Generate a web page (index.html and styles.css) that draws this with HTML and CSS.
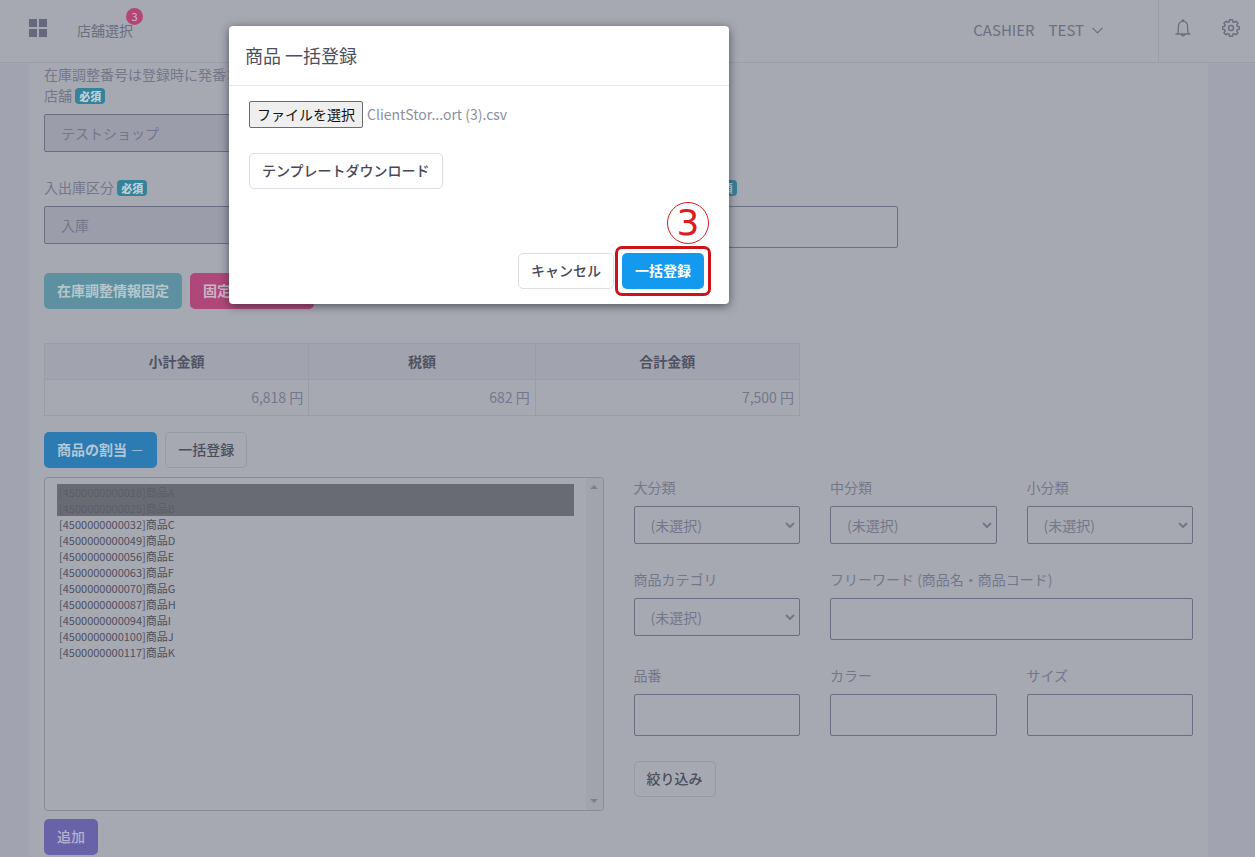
FILE: index.html
```html
<!DOCTYPE html>
<html lang="ja">
<head>
<meta charset="utf-8">
<title>商品 一括登録</title>
<link rel="stylesheet" href="styles.css">
</head>
<body>
<header class="topbar">
  <button class="icon-btn menu-btn" type="button" aria-label="メニュー">
    <svg width="18" height="18" viewBox="0 0 18 18" fill="currentColor"><path d="M0 0h8v8H0zM10 0h8v8h-8zM0 10h8v8H0zM10 10h8v8h-8z"/></svg>
  </button>
  <a class="shop-link" href="#">店舗選択<span class="count">3</span></a>
  <button class="account" type="button"><span>CASHIER</span><span>TEST</span>
    <svg width="11" height="7" viewBox="0 0 11 7" fill="none" stroke="currentColor" stroke-width="1.200"><path d="M.5 .8 5.500 5.800 10.500 .8"/></svg>
  </button>
  <div class="tools">
    <button class="icon-btn" type="button" aria-label="通知">
      <svg width="18" height="18" viewBox="0 0 18 18" fill="none" stroke="currentColor" stroke-width="1.300" stroke-linejoin="round"><path d="M1.500 15h15M3.500 15c.9-1.500.9-3 .9-7C4.400 4.500 6 2.300 9 2.300S13.600 4.500 13.600 8c0 4 0 5.500.9 7M8 2.200C8 .6 10 .6 10 2.200M7.300 15.500c.4 1.700 3 1.700 3.400 0"/></svg>
    </button>
    <button class="icon-btn" type="button" aria-label="設定">
      <svg width="18" height="18" viewBox="0 0 18 18" fill="none" stroke="currentColor" stroke-width="1.500" stroke-linejoin="round"><path d="M7.600 .7h2.800l.4 2.100 1.400.6 1.800-1.200 2 2-1.200 1.800.6 1.400 2.100.4v2.400l-2.100.4-.6 1.400 1.200 1.800-2 2-1.800-1.200-1.400.6-.4 2.100H7.600l-.4-2.100-1.400-.6L4 15.800l-2-2L3.200 12l-.6-1.400-2.100-.4V7.800l2.100-.4L3.200 6 2 4.200l2-2 1.800 1.200 1.400-.6z"/><circle cx="9" cy="9" r="2.500"/></svg>
    </button>
  </div>
</header>

<main class="sheet">
  <p class="note">在庫調整番号は登録時に発番されます。</p>
  <div class="row">
    <div class="field">
      <label for="shop">店舗 <span class="req">必須</span></label>
      <input id="shop" class="control locked" type="text" value="テストショップ" readonly>
    </div>
  </div>
  <div class="row">
    <div class="field">
      <label for="kind">入出庫区分 <span class="req">必須</span></label>
      <input id="kind" class="control locked" type="text" value="入庫" readonly>
    </div>
    <div class="field third">
      <label for="date">在庫調整日 <span class="req">必須</span></label>
      <input id="date" class="control tall" type="text">
    </div>
  </div>
  <div class="actions">
    <button class="btn teal" type="button">在庫調整情報固定</button>
    <button class="btn pink" type="button">固定を解除する</button>
  </div>

  <table class="totals">
    <thead><tr><th class="wide">小計金額</th><th>税額</th><th class="wide">合計金額</th></tr></thead>
    <tbody><tr><td>6,818 円</td><td>682 円</td><td>7,500 円</td></tr></tbody>
  </table>

  <div class="actions assign">
    <button class="btn blue" type="button">商品の割当 <span class="dash">－</span></button>
    <button class="btn outline" type="button">一括登録</button>
  </div>

  <div class="picker">
    <div>
      <div class="listbox">
        <select class="items" multiple size="11" aria-label="商品">
          <option selected>[4500000000018]商品A</option>
          <option selected>[4500000000025]商品B</option>
          <option>[4500000000032]商品C</option>
          <option>[4500000000049]商品D</option>
          <option>[4500000000056]商品E</option>
          <option>[4500000000063]商品F</option>
          <option>[4500000000070]商品G</option>
          <option>[4500000000087]商品H</option>
          <option>[4500000000094]商品I</option>
          <option>[4500000000100]商品J</option>
          <option>[4500000000117]商品K</option>
        </select>
        <div class="track" aria-hidden="true">
          <svg width="8" height="4" viewBox="0 0 8 4" fill="currentColor"><path d="M0 4 4 0l4 4z"/></svg>
          <svg width="8" height="4" viewBox="0 0 8 4" fill="currentColor"><path d="M0 0h8L4 4z"/></svg>
        </div>
      </div>
      <button class="btn purple" type="button">追加</button>
    </div>
    <form class="filters">
      <div class="field"><label for="c1">大分類</label><div class="select"><select id="c1" class="control"><option>(未選択)</option></select><svg width="10" height="7" viewBox="0 0 10 7" fill="none" stroke="currentColor" stroke-width="2"><path d="M1 1l4 4 4-4"/></svg></div></div>
      <div class="field"><label for="c2">中分類</label><div class="select"><select id="c2" class="control"><option>(未選択)</option></select><svg width="10" height="7" viewBox="0 0 10 7" fill="none" stroke="currentColor" stroke-width="2"><path d="M1 1l4 4 4-4"/></svg></div></div>
      <div class="field"><label for="c3">小分類</label><div class="select"><select id="c3" class="control"><option>(未選択)</option></select><svg width="10" height="7" viewBox="0 0 10 7" fill="none" stroke="currentColor" stroke-width="2"><path d="M1 1l4 4 4-4"/></svg></div></div>
      <div class="field"><label for="c4">商品カテゴリ</label><div class="select"><select id="c4" class="control"><option>(未選択)</option></select><svg width="10" height="7" viewBox="0 0 10 7" fill="none" stroke="currentColor" stroke-width="2"><path d="M1 1l4 4 4-4"/></svg></div></div>
      <div class="field span2"><label for="word">フリーワード (商品名・商品コード)</label><input id="word" class="control tall" type="text"></div>
      <div class="field"><label for="code">品番</label><input id="code" class="control tall" type="text"></div>
      <div class="field"><label for="color">カラー</label><input id="color" class="control tall" type="text"></div>
      <div class="field"><label for="size">サイズ</label><input id="size" class="control tall" type="text"></div>
      <div><button class="btn outline" type="button">絞り込み</button></div>
    </form>
  </div>
</main>

<div class="modal" role="dialog" aria-labelledby="modal-title">
  <h2 id="modal-title" class="modal-title">商品 一括登録</h2>
  <div class="modal-body">
    <div class="file">
      <input id="csv" class="file-input" type="file" accept=".csv">
      <label class="file-btn" for="csv">ファイルを選択</label>
      <span class="file-name">ClientStor...ort (3).csv</span>
    </div>
    <button class="btn plain" type="button">テンプレートダウンロード</button>
  </div>
  <div class="modal-foot">
    <button class="btn plain" type="button">キャンセル</button>
    <div class="marked">
      <button class="btn primary" type="button">一括登録</button>
      <span class="frame"></span>
      <span class="step">3</span>
    </div>
  </div>
</div>
</body>
</html>
```

FILE: styles.css
```css
* { box-sizing: border-box; }

body {
  margin: 0;
  background: #a1a3b0;
  color: #74778a;
  font: 14px/21px "Noto Sans CJK JP", sans-serif;
  overflow: hidden;
}

button, input, select { font: inherit; color: inherit; }
button { cursor: pointer; }
a { color: inherit; text-decoration: none; }

/* Top bar */
.topbar {
  display: flex;
  align-items: center;
  height: 63px;
  padding-left: 29px;
  background: #a7a9b2;
  border-bottom: 1px solid #9b9eaa;
  color: #6c6f80;
}
.icon-btn {
  display: flex;
  padding: 0;
  border: 0;
  background: none;
}
.menu-btn { margin: 0 30px 6px 0; color: #66697d; }
.shop-link { position: relative; padding-bottom: 2px; }
.count {
  position: absolute;
  top: -12px;
  right: -10px;
  width: 17px;
  height: 17px;
  border-radius: 50%;
  background: #b34676;
  color: #c9bcc8;
  font-size: 11px;
  line-height: 17px;
  text-align: center;
}
.account {
  display: flex;
  align-items: center;
  gap: 14px;
  margin-left: auto;
  padding: 0 55px 3px 0;
  border: 0;
  background: none;
  font-size: 15px;
}
.account svg { margin: 2px 0 0 -6px; }
.tools {
  display: flex;
  align-items: center;
  gap: 30px;
  height: 100%;
  padding: 0 15px 6px;
  border-left: 1px solid #9b9eaa;
}

/* Content sheet */
.sheet {
  margin: 0 47px 0 29px;
  padding: 1px 15px 16px;
  background: #a7a9b2;
}
.note { margin: 0; }
.row {
  display: grid;
  grid-template-columns: repeat(4, 1fr);
  gap: 30px;
  margin-bottom: 25px;
}
.third { grid-column: 3; }
.field label {
  display: block;
  margin-bottom: 8px;
}
.row:has(.third) { height: 71px; }
.req {
  display: inline-block;
  padding: 0 4px;
  border-radius: 4px;
  background: #35829a;
  color: #c1d0d7;
  font-size: 11px;
  font-weight: 900;
  line-height: 16px;
}
.control {
  display: block;
  width: 100%;
  height: 38px;
  padding: 0 16px;
  border: 1px solid #6b6e80;
  border-radius: 2px;
  background: #a7a9b2;
  outline: 0;
}
.tall { height: 42px; }
.locked { background: #9b9dab; }

.btn {
  height: 36px;
  padding: 0 12px 2px;
  border: 1px solid transparent;
  border-radius: 5px;
  font-weight: 500;
  white-space: nowrap;
}
.teal { background: #5d91a0; color: #b5c6cd; font-weight: 700; }
.pink { background: #b0477a; color: #cbb5c6; font-weight: 700; }
.blue { background: #2c7bb3; color: #b3c7d8; font-weight: 700; }
.purple { background: #6863a9; color: #b5b3cf; }
.outline { background: transparent; border-color: #959ba3; color: #4b4e5c; }
.plain { background: #fff; border-color: #dcdee2; color: #464857; }
.primary { background: #1399ee; color: #fff; font-weight: 700; }
.dash { font-weight: 300; }

.actions { display: flex; gap: 8px; }

.totals {
  width: calc((100% + 30px) * 2 / 3 - 30px);
  margin: 34px 0 16px;
  border-collapse: collapse;
  table-layout: fixed;
}
.totals th, .totals td {
  height: 36px;
  padding: 0 5px;
  border: 1px solid #9b9ea8;
}
.totals th { background: #a1a3ae; color: #505363; font-weight: 700; }
.totals .wide { width: 35%; }
.totals td { text-align: right; }

.assign { margin-bottom: 9px; }

/* Product picker */
.picker {
  display: grid;
  grid-template-columns: 1fr 1fr;
  gap: 30px;
}
.listbox {
  display: flex;
  height: 334px;
  margin-bottom: 8px;
  border: 1px solid #888c95;
  border-radius: 4px;
  overflow: hidden;
}
.items {
  flex: 1;
  height: 100%;
  padding: 6px 12px;
  border: 0;
  outline: 0;
  background: transparent;
  color: #4d4f5b;
  font-size: 11px;
  line-height: 16px;
  overflow: hidden;
}
.items option {
  height: 16px;
  min-height: 16px;
  padding: 0 2px;
  line-height: 16px;
}
.items option:checked {
  background: linear-gradient(#686b73, #686b73);
  -webkit-text-fill-color: #5b5e67;
}
.track {
  display: flex;
  flex-direction: column;
  justify-content: space-between;
  align-items: center;
  width: 17px;
  padding: 7px 0;
  background: #a1a4ac;
  color: #7d8089;
}
.filters {
  display: grid;
  grid-template-columns: repeat(3, 1fr);
  grid-template-rows: 67px 71px 71px auto;
  gap: 25px 30px;
  align-items: start;
}
.span2 { grid-column: span 2; }
.select { position: relative; }
.select .control { appearance: none; }
.select svg {
  position: absolute;
  top: 16px;
  right: 5px;
  pointer-events: none;
}

/* Dialog */
.modal {
  position: absolute;
  top: 26px;
  left: 229px;
  width: 500px;
  border-radius: 4px;
  background: #fff;
  box-shadow: 0 2px 10px rgba(30, 32, 45, .65);
}
.modal-title {
  margin: 0;
  padding: 17px 16px 18px;
  border-bottom: 1px solid #e4e5e9;
  color: #4d4f60;
  font-size: 18px;
  font-weight: 400;
  line-height: 24px;
}
.modal-body { padding: 15px 20px 0; }
.file {
  display: flex;
  align-items: center;
  gap: 4px;
  margin-bottom: 25px;
}
.file-input {
  position: absolute;
  width: 1px;
  height: 1px;
  opacity: 0;
}
.file-btn {
  padding: 2px 7px;
  border: 1px solid #6b6b6b;
  border-radius: 2px;
  background: #efefef;
  color: #111;
}
.file-name { color: #8b8fa3; }
.modal-foot {
  display: flex;
  justify-content: flex-end;
  gap: 8px;
  padding: 64px 25px 15px;
}
.marked { position: relative; }
.frame {
  position: absolute;
  inset: -7px;
  border: 3px solid #cc1418;
  border-radius: 7px;
  pointer-events: none;
}
.step {
  position: absolute;
  top: -51px;
  right: -5px;
  width: 42px;
  height: 42px;
  border: 1px solid #dc1c20;
  border-radius: 50%;
  color: #dc1c20;
  font: 36px/40px "DejaVu Sans", sans-serif;
  text-align: center;
}
```
